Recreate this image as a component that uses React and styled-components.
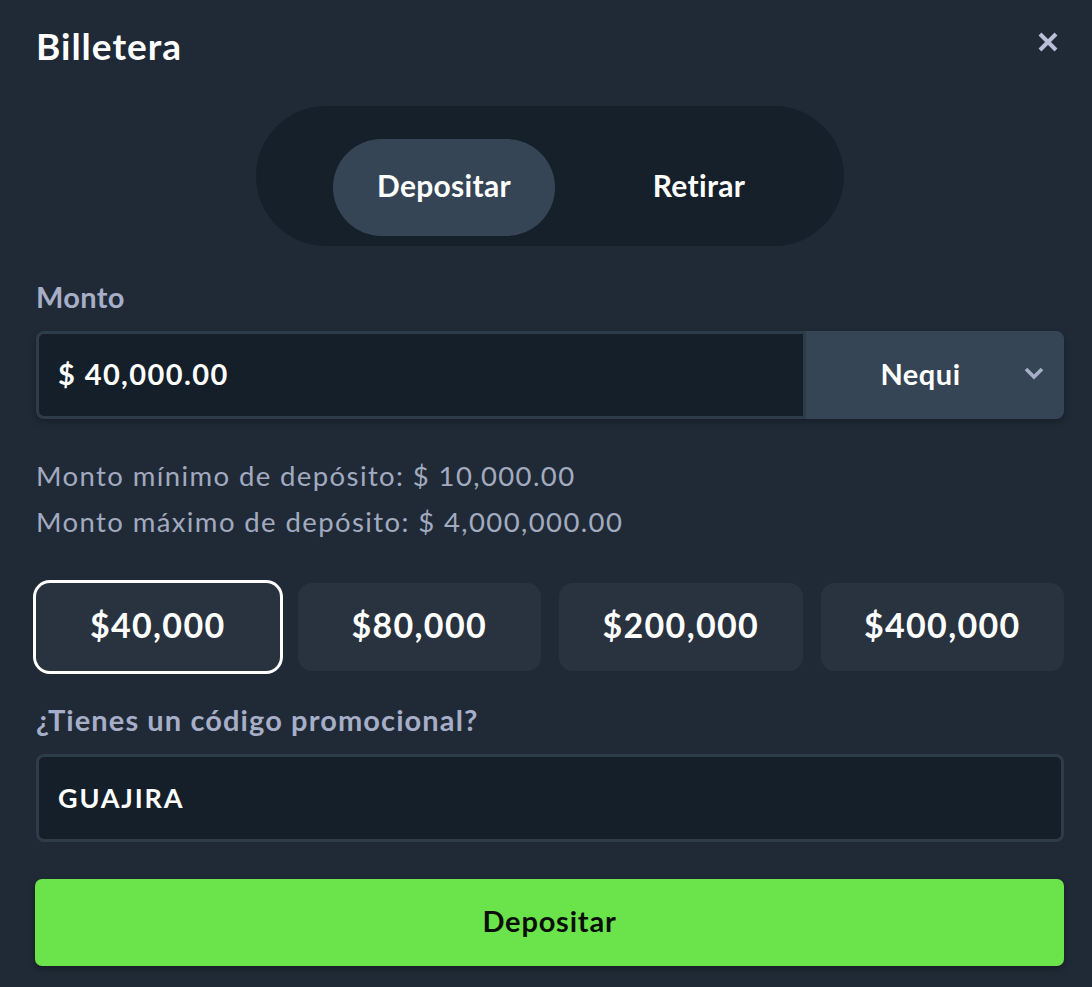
import React, { useState } from "react";
import styled, { createGlobalStyle } from "styled-components";

const Global = createGlobalStyle`
  html, body { margin: 0; padding: 0; background: #1f2a36; }
  body { font-family: Lato, "Noto Sans", sans-serif; color: #fff; }
  * { box-sizing: border-box; }
`;

const Panel = styled.div`
  width: 1092px;
  height: 987px;
  background: #1f2a36;
  padding: 0 28px 0 36px;
  display: flex;
  flex-direction: column;
`;

const Header = styled.div`
  height: 90px;
  display: flex;
  align-items: center;
  justify-content: space-between;
`;

const Title = styled.h1`
  margin: 0;
  font-size: 37px;
  font-weight: 700;
  color: #fff;
  letter-spacing: 1px;
`;

const CloseBtn = styled.button`
  background: none;
  border: 0;
  padding: 0;
  width: 24px;
  height: 24px;
  margin-right: 4px;
  margin-top: -6px;
  display: flex;
  align-items: center;
  justify-content: center;
  cursor: pointer;
`;

const Toggle = styled.div`
  align-self: center;
  margin-top: 16px;
  width: 588px;
  height: 140px;
  border-radius: 70px;
  background: #15202b;
  padding: 33px 0 0 77px;
  display: flex;
  align-items: flex-start;
  gap: 33px;
`;

const ToggleItem = styled.button`
  width: 222px;
  height: 97px;
  border: 0;
  border-radius: 49px;
  background: ${(p) => (p.$active ? "#364555" : "transparent")};
  color: #fff;
  font-family: inherit;
  font-weight: 700;
  font-size: 30px;
  letter-spacing: 0.3px;
  padding: 0 0 5px;
  cursor: pointer;
`;

const Label = styled.div`
  margin-top: ${(p) => p.$mt}px;
  line-height: 42px;
  font-size: 29px;
  font-weight: 700;
  color: #a7aec8;
  letter-spacing: ${(p) => p.$ls || 0}px;
`;

const AmountRow = styled.div`
  margin-top: 13px;
  height: 88px;
  display: flex;
  border-radius: 8px;
  box-shadow: 0 3px 6px rgba(0, 0, 0, 0.25);
`;

const Field = styled.div`
  flex: ${(p) => (p.$grow ? 1 : "none")};
  height: 88px;
  background: #151f29;
  border: 3px solid #2e3b49;
  border-radius: ${(p) => (p.$joined ? "8px 0 0 8px" : "8px")};
  display: flex;
  align-items: center;
  padding: 0 0 4px 19px;
  font-size: 29px;
  font-weight: 700;
  letter-spacing: 1.4px;
  color: #fff;
`;

const Select = styled.div`
  width: 258px;
  background: #364555;
  border-radius: 0 8px 8px 0;
  display: flex;
  align-items: center;
  padding: 0 19px 4px 12px;
  font-size: 29px;
  font-weight: 700;
  letter-spacing: 0.5px;
`;

const SelectText = styled.span`
  flex: 1;
  text-align: center;
`;

const Limits = styled.div`
  margin-top: 34px;
  font-size: 27.5px;
  line-height: 46px;
  color: #a3aac0;
  letter-spacing: 1.4px;
`;

const Quick = styled.div`
  margin-top: 38px;
  display: grid;
  grid-template-columns: repeat(4, 1fr);
  gap: 18px;
`;

const QuickBtn = styled.button`
  height: 88px;
  border: 0;
  border-radius: 14px;
  background: #29333f;
  color: #fff;
  font-family: inherit;
  font-weight: 700;
  font-size: 34px;
  letter-spacing: 1.3px;
  padding: 0 0 5px;
  box-shadow: ${(p) => (p.$active ? "0 0 0 3px #ffffff" : "none")};
  cursor: pointer;
`;

const PromoField = styled(Field)`
  margin-top: 13px;
  font-size: 27px;
  letter-spacing: 1.8px;
  padding-bottom: 2px;
`;

const Submit = styled.button`
  margin-top: 37px;
  margin-left: -1px;
  height: 87px;
  border: 0;
  border-radius: 7px;
  background: #6ae44a;
  color: #0b0f0a;
  font-family: inherit;
  font-weight: 700;
  font-size: 29px;
  letter-spacing: 0.8px;
  padding: 0 0 4px;
  box-shadow: 0 3px 6px rgba(0, 0, 0, 0.3);
  cursor: pointer;
`;

const amounts = ["$40,000", "$80,000", "$200,000", "$400,000"];

export default function App() {
  const [tab, setTab] = useState("dep");
  const [sel, setSel] = useState(0);
  return (
    <>
      <Global />
      <Panel>
        <Header>
          <Title>Billetera</Title>
          <CloseBtn aria-label="Cerrar">
            <svg width="24" height="24" viewBox="0 0 24 24">
              <path d="M4 4 L20 20 M20 4 L4 20" stroke="#b9bfd6" strokeWidth="4" strokeLinecap="butt" />
            </svg>
          </CloseBtn>
        </Header>
        <Toggle>
          <ToggleItem $active={tab === "dep"} onClick={() => setTab("dep")}>Depositar</ToggleItem>
          <ToggleItem $active={tab === "ret"} onClick={() => setTab("ret")}>Retirar</ToggleItem>
        </Toggle>
        <Label $mt={30} $ls={0.3}>Monto</Label>
        <AmountRow>
          <Field $grow $joined>$ 40,000.00</Field>
          <Select>
            <SelectText>Nequi</SelectText>
            <svg width="22" height="14" viewBox="0 0 22 14">
              <path d="M3 3 L11 11 L19 3" fill="none" stroke="#a7aec8" strokeWidth="3.6" />
            </svg>
          </Select>
        </AmountRow>
        <Limits>
          <div>Monto mínimo de depósito: $ 10,000.00</div>
          <div>Monto máximo de depósito: $ 4,000,000.00</div>
        </Limits>
        <Quick>
          {amounts.map((a, i) => (
            <QuickBtn key={a} $active={sel === i} onClick={() => setSel(i)}>{a}</QuickBtn>
          ))}
        </Quick>
        <Label $mt={28} $ls={1.1}>¿Tienes un código promocional?</Label>
        <PromoField>GUAJIRA</PromoField>
        <Submit>Depositar</Submit>
      </Panel>
    </>
  );
}
